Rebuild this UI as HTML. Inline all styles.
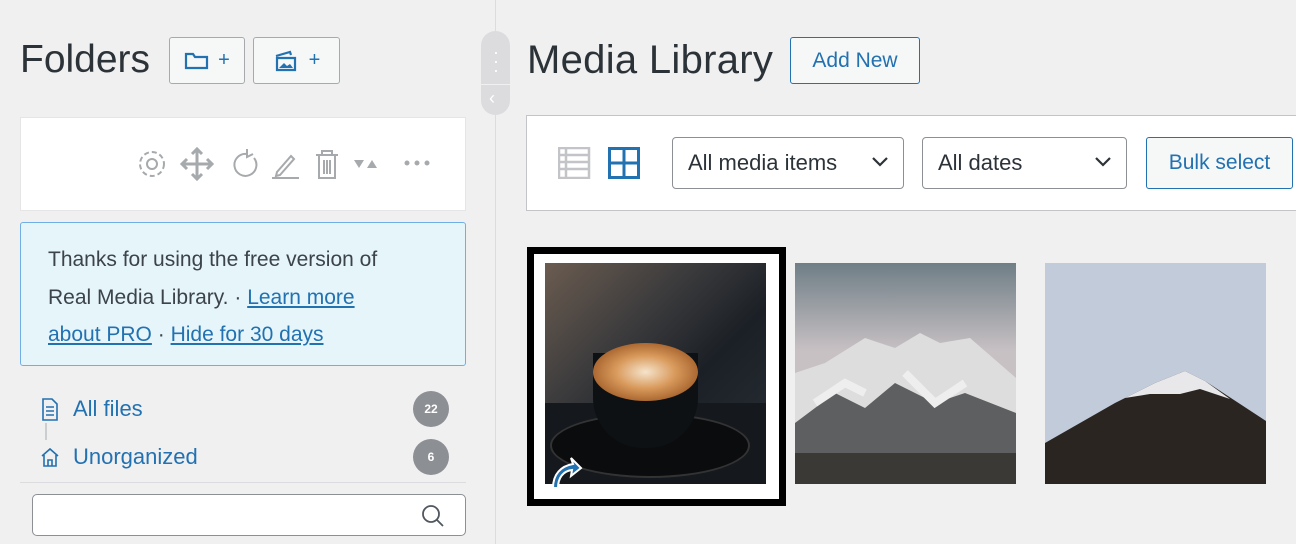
<!DOCTYPE html>
<html><head><style>
*{box-sizing:border-box;margin:0;padding:0}
body{width:1296px;height:544px;background:#f0f0f1;font-family:"Liberation Sans",sans-serif;position:relative;overflow:hidden;color:#1d2327}
.a{position:absolute}
.btn{position:absolute;border:1px solid #a7aaad;border-radius:3px;background:#f6f7f7;color:#2271b1;display:flex;align-items:center;justify-content:center;font-size:22px}
.sel{position:absolute;border:1px solid #8c8f94;border-radius:4px;background:#fff;font-size:22px;color:#2c3338;display:flex;align-items:center;padding-left:15px}
.sel svg{position:absolute;right:14px;top:18px}
a{color:#2271b1}
.badge{position:absolute;width:36px;height:36px;border-radius:50%;background:#8c8f94;color:#fff;font-size:12px;font-weight:bold;display:flex;align-items:center;justify-content:center;left:413px}
</style></head><body>
<div class="a" style="left:495px;top:0;width:1px;height:544px;background:#dcdcde"></div>
<div class="a" style="left:20px;top:38px;font-size:39px;color:#2c3338">Folders</div>
<div class="btn" style="left:169px;top:37px;width:76px;height:47px"><svg width="26" height="20" viewBox="0 0 26 20"><path d="M2 3h7l2 3h12v11H2z" fill="none" stroke="#2271b1" stroke-width="2.2"/></svg><span style="margin-left:8px;font-size:20px">+</span></div>
<div class="btn" style="left:253px;top:37px;width:87px;height:47px"><svg width="26" height="22" viewBox="0 0 26 22"><path d="M3 6l14-4 1 3M4 8h18v12H4z" fill="none" stroke="#2271b1" stroke-width="2.2"/><path d="M6 18l5-5 3 3 3-2 3 4z" fill="#2271b1"/></svg><span style="margin-left:10px;font-size:20px">+</span></div>
<div class="a" style="left:481px;top:31px;width:29px;height:84px;border-radius:15px;background:#dcdcde"></div>
<div class="a" style="left:481px;top:84px;width:29px;height:1px;background:#f0f0f1"></div>
<div class="a" style="left:493px;top:48px;color:#fff;font-size:18px;line-height:9px;width:6px">·<br>·<br>·</div>
<div class="a" style="left:489px;top:88px;color:#fff;font-size:18px">‹</div>
<div class="a" style="left:20px;top:117px;width:446px;height:94px;background:#fff;border:1px solid #e5e5e5"></div>
<svg class="a" style="left:135px;top:145px" width="310" height="36" viewBox="0 0 310 36" fill="none" stroke="#a7aaad" stroke-width="2">
<circle cx="17" cy="19" r="5"/><circle cx="17" cy="19" r="12" stroke-dasharray="5 3"/>
<path d="M62 4v30M47 19h30M57 9l5-5 5 5M57 29l5 5 5-5M52 14l-5 5 5 5M72 14l5 5-5 5" stroke-width="3"/>
<path d="M112 9a11 11 0 1 0 7 4M112 4v8l6-3"/>
<path d="M137 33h27M142 27l14-16 3 3-14 16-4 1z"/>
<path d="M181 10h22M187 10V6h10v4M184 10v23h16V10M189 15v14M192 15v14M195 15v14"/>
<path d="M219 15h10l-5 8zM232 23l5-8 5 8z" fill="#a7aaad" stroke="none"/>
<circle cx="272" cy="18" r="1.5" fill="#a7aaad"/><circle cx="282" cy="18" r="1.5" fill="#a7aaad"/><circle cx="292" cy="18" r="1.5" fill="#a7aaad"/>
</svg>
<div class="a" style="left:20px;top:222px;width:446px;height:144px;background:#e5f5fa;border:1px solid #72aee6;border-radius:3px;padding:18px 10px 0 27px;font-size:21px;line-height:37.5px;color:#3c434a;white-space:nowrap">Thanks for using the free version of<br>Real Media Library. · <a href="#">Learn more</a><br><a href="#">about PRO</a> · <a href="#">Hide for 30 days</a></div>
<svg class="a" style="left:40px;top:397px" width="20" height="75" viewBox="0 0 20 75" fill="none" stroke="#2271b1" stroke-width="1.6"><path d="M3 2h9l5 5v16H3zM6 10h8M6 14h8M6 18h8"/><path d="M6 26v17" stroke="#c3c4c7"/><path d="M2 59l8-7 8 7M4 58v11h12V58M8 69v-6h4v6"/></svg>
<div class="a" style="left:73px;top:396px;font-size:22px;color:#2271b1">All files</div>
<div class="a" style="left:73px;top:444px;font-size:22px;color:#2271b1">Unorganized</div>
<div class="badge" style="top:391px">22</div>
<div class="badge" style="top:439px">6</div>
<div class="a" style="left:20px;top:482px;width:446px;height:1px;background:#dcdcde"></div>
<div class="a" style="left:32px;top:494px;width:434px;height:42px;background:#fff;border:1px solid #8c8f94;border-radius:5px"></div>
<svg class="a" style="left:420px;top:503px" width="26" height="26" viewBox="0 0 26 26" fill="none" stroke="#50575e" stroke-width="1.8"><circle cx="11" cy="11" r="8"/><path d="M17 17l6 6"/></svg>
<div class="a" style="left:527px;top:38px;font-size:40px;color:#2c3338;letter-spacing:0.3px">Media Library</div>
<div class="btn" style="left:790px;top:37px;width:130px;height:47px;border-color:#2271b1;font-size:21px">Add New</div>
<div class="a" style="left:526px;top:115px;width:780px;height:96px;background:#fff;border:1px solid #c3c4c7"></div>
<svg class="a" style="left:558px;top:147px" width="84" height="32" viewBox="0 0 84 32"><g fill="none" stroke="#c3c4c7" stroke-width="2.5"><rect x="1" y="1" width="30" height="30"/><path d="M1 8h30M1 15h30M1 22h30M8 1v30"/></g><g fill="none" stroke="#2271b1" stroke-width="3"><rect x="51.5" y="1.5" width="29" height="29"/><path d="M66 1v30M51 16h30"/></g></svg>
<div class="sel" style="left:672px;top:137px;width:232px;height:52px">All media items<svg width="18" height="12" viewBox="0 0 18 12"><path d="M2 2l7 7 7-7" fill="none" stroke="#2c3338" stroke-width="2.2"/></svg></div>
<div class="sel" style="left:922px;top:137px;width:205px;height:52px">All dates<svg width="18" height="12" viewBox="0 0 18 12"><path d="M2 2l7 7 7-7" fill="none" stroke="#2c3338" stroke-width="2.2"/></svg></div>
<div class="btn" style="left:1146px;top:137px;width:147px;height:52px;border-color:#2271b1;font-size:21px">Bulk select</div>
<div class="a" style="left:527px;top:247px;width:259px;height:259px;background:#fff;border:7px solid #000"></div>
<div class="a" style="left:545px;top:263px;width:221px;height:221px;overflow:hidden;background:linear-gradient(135deg,#6b5c50 0,#3a3a3c 35%,#1b2026 60%,#2a3038 100%)">
<div class="a" style="left:0;top:140px;width:221px;height:81px;background:#15191d"></div>
<div class="a" style="left:5px;top:150px;width:200px;height:65px;border-radius:50%;background:#0a0c0e;border:2px solid #333"></div>
<div class="a" style="left:48px;top:90px;width:105px;height:95px;border-radius:0 0 50px 50px;background:#0e1114"></div>
<div class="a" style="left:48px;top:80px;width:105px;height:58px;border-radius:50%;background:radial-gradient(ellipse at center,#f5e4cc 0,#d99a5c 40%,#a5622c 75%,#222 90%)"></div>
</div>
<svg class="a" style="left:547px;top:450px" width="36" height="40" viewBox="0 0 36 40"><path d="M6 38c0-14 8-22 20-24l-2-6 10 10-10 8 1-6c-9 1-14 8-14 18z" fill="#2271b1" stroke="#fff" stroke-width="2"/></svg>
<svg class="a" style="left:795px;top:263px" width="221" height="221" viewBox="0 0 221 221"><defs><linearGradient id="s1" x1="0" y1="0" x2="0" y2="1"><stop offset="0" stop-color="#6f7e86"/><stop offset="0.4" stop-color="#c8c1c4"/></linearGradient></defs><rect width="221" height="221" fill="url(#s1)"/><path d="M0 110l30-10 40-25 30 10 25-15 20 10 30-5 46 40v106H0z" fill="#ddd"/><path d="M0 160l40-30 30 15 30-25 40 20 30-10 51 20v71H0z" fill="#5d5f60"/><path d="M20 140l30-20 20 10M110 110l30 30 30-20" stroke="#eee" stroke-width="8" fill="none"/><rect y="190" width="221" height="31" fill="#3b3936"/></svg>
<svg class="a" style="left:1045px;top:263px" width="221" height="221" viewBox="0 0 221 221"><rect width="221" height="221" fill="#c1cbd9"/><path d="M0 180l70-40 40-20 30-12 20 10 61 40v63H0z" fill="#2a2520"/><path d="M80 135l30-15 30-12 20 10 25 18-30-10-20 5-30 0z" fill="#e8e8ea"/></svg>
</body></html>
